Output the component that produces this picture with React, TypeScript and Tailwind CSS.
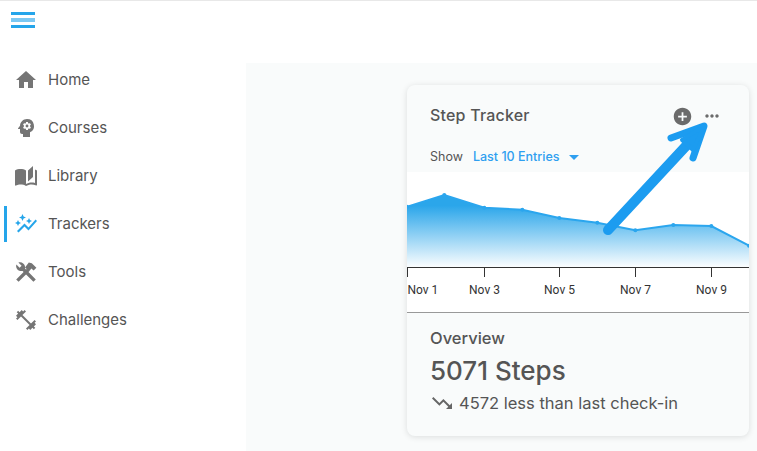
import { MdAddCircle, MdArrowDropDown, MdAutoGraph, MdFitnessCenter, MdHome, MdMoreHoriz, MdPsychology, MdTrendingDown } from 'react-icons/md'
import type { IconType } from 'react-icons'

function BookIcon({ size, className }: { size?: number; className?: string }) {
  return (
    <svg width={size} height={size} viewBox="0 0 24 24" fill="currentColor" className={className}>
      <path d="M19 2L14 6.5V17.5L19 13V2M6.5 5C4.55 5 2.45 5.4 1 6.5V21.16C1 21.41 1.25 21.66 1.5 21.66C1.6 21.66 1.65 21.59 1.75 21.59C3.1 20.94 5.05 20.5 6.5 20.5C8.45 20.5 10.55 20.9 12 22C13.35 21.15 15.8 20.5 17.5 20.5C19.15 20.5 20.85 20.81 22.25 21.56C22.35 21.61 22.4 21.59 22.5 21.59C22.75 21.59 23 21.34 23 21.09V6.5C22.4 6.05 21.75 5.75 21 5.5V19C19.9 18.65 18.7 18.5 17.5 18.5C15.8 18.5 13.35 19.15 12 20V6.5C10.55 5.4 8.45 5 6.5 5Z" />
    </svg>
  )
}

// crossed hammer and wrench
function ToolsIcon({ size, className }: { size?: number; className?: string }) {
  return (
    <svg width={size} height={size} viewBox="0 0 24 24" fill="currentColor" className={className}>
      <path d="M4.6 21.8L2.2 19.4L12.6 9L11 7.4L14.8 2.6L17.8 3.2L22.4 7.8L19.6 10.6L17.4 8.6L15 11.4Z" />
      <path d="M19.4 21.8L21.8 19.4L11 8.6C11.4 6.6 10.8 4.8 9.2 3.4C7.8 2.2 6 2 4.4 2.6L7.6 5.8L5.6 7.8L2.4 4.6C1.8 6.2 2.2 8 3.4 9.4C4.8 10.8 6.6 11.4 8.6 11Z" />
    </svg>
  )
}

const NAV: { label: string; icon: IconType; active?: boolean }[] = [
  { label: 'Home', icon: MdHome },
  { label: 'Courses', icon: MdPsychology },
  { label: 'Library', icon: BookIcon as IconType },
  { label: 'Trackers', icon: MdAutoGraph, active: true },
  { label: 'Tools', icon: ToolsIcon as IconType },
  { label: 'Challenges', icon: MdFitnessCenter },
]

const POINTS: [number, number][] = [
  [0, 34.7], [37.3, 23], [77.3, 35.7], [115.3, 37.7], [152.3, 46],
  [190.3, 50.7], [228.3, 58.3], [266.3, 53], [304.3, 54], [342, 73.7],
]

const TICKS = [
  { x: 0.5, label: 'Nov 1', anchor: 'start' },
  { x: 77.5, label: 'Nov 3', anchor: 'middle' },
  { x: 152.5, label: 'Nov 5', anchor: 'middle' },
  { x: 228.5, label: 'Nov 7', anchor: 'middle' },
  { x: 304.5, label: 'Nov 9', anchor: 'middle' },
]

function StepChart() {
  const line = POINTS.map(([x, y]) => `${x},${y}`).join(' ')
  return (
    <svg width="342" height="140" viewBox="0 0 342 140" className="block bg-white">
      <defs>
        <linearGradient id="area" x1="0" y1="0.15" x2="0" y2="1">
          <stop offset="0" stopColor="#2ba6ea" />
          <stop offset="1" stopColor="#2ba6ea" stopOpacity="0.02" />
        </linearGradient>
      </defs>
      <polygon points={`0,95 ${line} 342,95`} fill="url(#area)" />
      <polyline points={line} fill="none" stroke="#2ba6ee" strokeWidth="2" />
      {POINTS.map(([x, y]) => (
        <circle key={x} cx={x} cy={y} r="2" fill="#2ba6ee" />
      ))}
      <line x1="0" y1="95.5" x2="342" y2="95.5" stroke="#333" />
      {TICKS.map((t) => (
        <g key={t.label}>
          <line x1={t.x} y1="95" x2={t.x} y2="105" stroke="#333" />
          <text x={t.x} y="122" textAnchor={t.anchor as 'start' | 'middle'} fontSize="12" fill="#333" fontFamily="Roboto, sans-serif">
            {t.label}
          </text>
        </g>
      ))}
    </svg>
  )
}

export default function App() {
  return (
    <div className="relative flex h-[451px] w-[757px] overflow-hidden border-t border-[#e8e8e8] bg-white text-[#555] font-['Inter',sans-serif]">
      <aside className="w-[246px] shrink-0">
        <div className="flex h-[55px] flex-col gap-[3px] pl-[11px] pt-[11px]">
          <span className="h-[3px] w-[24px] bg-[#25a5ea]" />
          <span className="h-[4px] w-[24px] bg-[#7cc8f2]" />
          <span className="h-[3px] w-[24px] bg-[#25a5ea]" />
        </div>
        <nav>
          {NAV.map(({ label, icon: Icon, active }) => (
            <div key={label} className="relative flex h-[48px] items-center pl-[14px]">
              {active && <span className="absolute left-[4px] top-[6px] h-[36px] w-[3px] bg-[#25a5ea]" />}
              <Icon size={24} className={active ? 'text-[#25a5ea]' : 'text-[#757575]'} />
              <span className="ml-[10px] text-[15px]">{label}</span>
            </div>
          ))}
        </nav>
      </aside>

      <div className="flex-1">
        <div className="h-[62px]" />
        <main className="h-[388px] bg-[#f9fbfb] pl-[161px] pt-[22px]">
          <section className="h-[351px] w-[342px] overflow-hidden rounded-lg bg-[#f9fbfb] shadow-[0_1px_6px_rgba(0,0,0,0.12)]">
            <div className="h-[87px] px-[23px]">
              <div className="flex h-[60px] items-center justify-between pr-[4px]">
                <h2 className="text-[16px] font-medium tracking-[0.2px]">Step Tracker</h2>
                <div className="mt-[2px] flex items-center gap-[9px]">
                  <MdAddCircle size={21} className="text-[#6b6b6b]" />
                  <MdMoreHoriz size={20} className="text-[#6b6b6b]" />
                </div>
              </div>
              <div className="flex items-center text-[12.5px]">
                <span>Show</span>
                <span className="ml-[10px] font-medium text-[#2f9ff0]">Last 10 Entries</span>
                <MdArrowDropDown size={24} className="ml-[2px] text-[#2f9ff0]" />
              </div>
            </div>
            <StepChart />
            <div className="border-t border-[#999] px-[23px] pt-[15px]">
              <div className="text-[16.5px] font-medium leading-[20px]">Overview</div>
              <div className="mt-[6px] text-[26px] font-medium leading-[34px]">5071 Steps</div>
              <div className="mt-[3px] flex items-center text-[16.5px] leading-[24px]">
                <MdTrendingDown size={24} className="mr-[5px] text-[#666]" />
                <span>4572 less than last check-in</span>
              </div>
            </div>
          </section>
        </main>
      </div>

      <svg className="pointer-events-none absolute left-0 top-[-1px]" width="757" height="451" fill="none" stroke="#1c9cf0" strokeLinecap="round" strokeLinejoin="round">
        <path d="M608 230 L699 132" strokeWidth="10" />
        <path d="M671 138 L704 126 L693 158" strokeWidth="7" />
        <path d="M704 126 L682 140 L693 150 Z" fill="#1c9cf0" strokeWidth="4" />
      </svg>
    </div>
  )
}
